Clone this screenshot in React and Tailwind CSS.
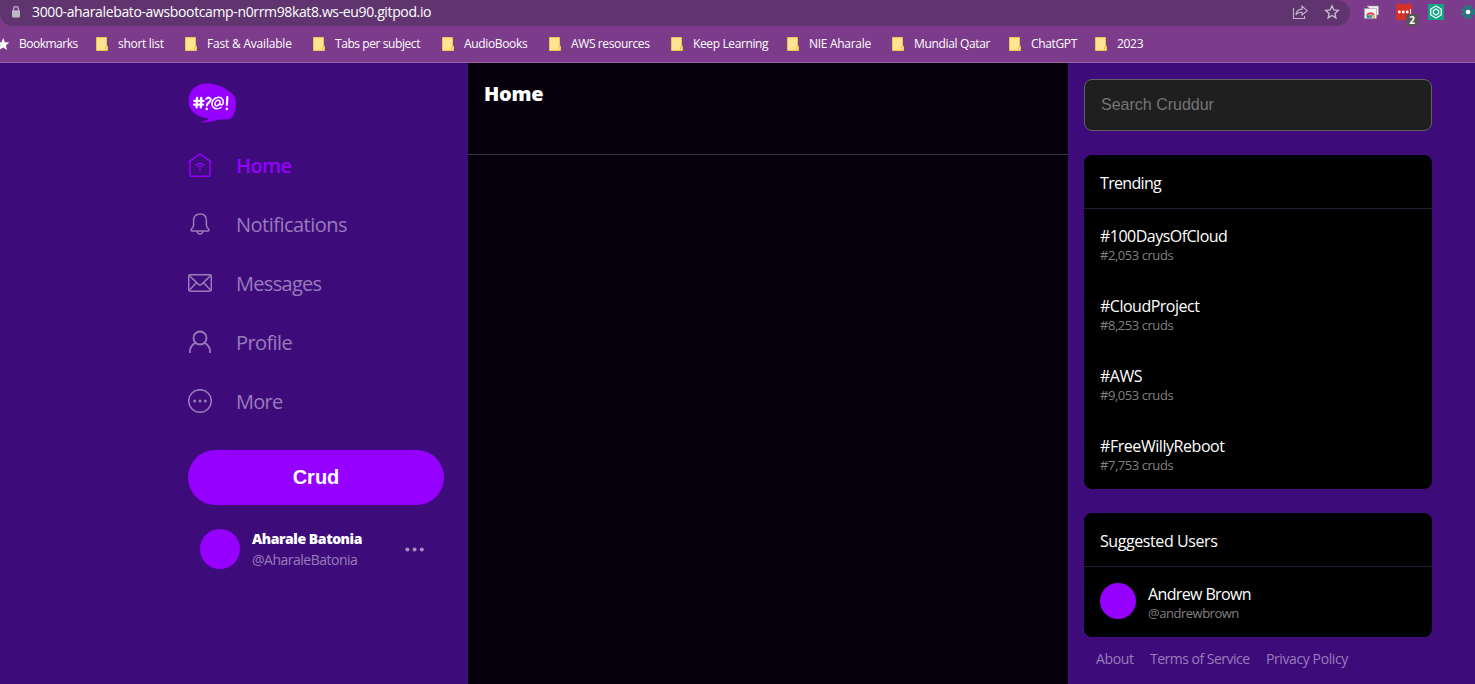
import React from "react";

const bookmarks = [
  { label: "short list", width: "w-[89px] tracking-[-0.3px]" },
  { label: "Fast & Available", width: "w-[128px] tracking-[-0.2px]" },
  { label: "Tabs per subject", width: "w-[129px] tracking-[-0.42px]" },
  { label: "AudioBooks", width: "w-[107px] tracking-[-0.35px]" },
  { label: "AWS resources", width: "w-[122px] tracking-[-0.38px]" },
  { label: "Keep Learning", width: "w-[116px] tracking-[-0.38px]" },
  { label: "NIE Aharale", width: "w-[105px] tracking-[-0.3px]" },
  { label: "Mundial Qatar", width: "w-[117px] tracking-[-0.35px]" },
  { label: "ChatGPT", width: "w-[86px] tracking-[-0.35px]" },
  { label: "2023", width: "w-[60px] tracking-[-0.3px]" },
];

const trends = [
  { tag: "#100DaysOfCloud", count: "#2,053 cruds", tracking: "tracking-[-0.52px]" },
  { tag: "#CloudProject", count: "#8,253 cruds", tracking: "tracking-[-0.5px]" },
  { tag: "#AWS", count: "#9,053 cruds", tracking: "tracking-[-0.5px]" },
  { tag: "#FreeWillyReboot", count: "#7,753 cruds", tracking: "tracking-[-0.44px]" },
];

function Icon({ children, className = "" }) {
  return (
    <svg
      width="24"
      height="24"
      viewBox="0 0 24 24"
      fill="none"
      stroke="currentColor"
      strokeWidth="1.5"
      className={`shrink-0 ${className}`}
    >
      {children}
    </svg>
  );
}

const HomeIcon = () => (
  <Icon>
    <path d="M0.5 9.2 L12 0.9 L23.5 9.2" />
    <path d="M1.9 8.4 V21.6 Q1.9 23.3 3.6 23.3 H20.4 Q22.1 23.3 22.1 21.6 V8.4" />
    <path d="M7.2 12.2 Q12 8.6 16.8 12.2" strokeWidth="1.2" />
    <path d="M9 14.2 Q12 12.1 15 14.2" strokeWidth="1.2" />
    <circle cx="12" cy="16.7" r="1.1" fill="currentColor" stroke="none" />
  </Icon>
);

const BellIcon = () => (
  <Icon>
    <path d="M12 1.9 C7.7 1.9 5.6 4.9 5.6 8.6 V13.2 Q5.6 14.3 4.6 15.6 L3.2 17.5 Q2.6 18.9 4 18.9 H20 Q21.4 18.9 20.8 17.5 L19.4 15.6 Q18.4 14.3 18.4 13.2 V8.6 C18.4 4.9 16.3 1.9 12 1.9 Z" />
    <path d="M9.2 19.2 C9.4 22.8 14.6 22.8 14.8 19.2" />
  </Icon>
);

const MailIcon = () => (
  <Icon>
    <rect x="0.7" y="3.7" width="22.6" height="16.6" rx="1.6" />
    <path d="M1.2 4.5 L10.2 13.1 Q12 14.7 13.8 13.1 L22.8 4.5" />
    <path d="M1.2 19.6 L8.4 11.6 M22.8 19.6 L15.6 11.6" />
  </Icon>
);

const ProfileIcon = () => (
  <Icon>
    <circle cx="12" cy="8" r="6.5" strokeWidth="1.8" />
    <path d="M1.8 23 C1.8 17.4 4.2 14.2 8 12.9 M16 12.9 C19.8 14.2 22.2 17.4 22.2 23" strokeWidth="1.8" />
  </Icon>
);

const MoreIcon = () => (
  <Icon>
    <circle cx="12" cy="12" r="11.3" />
    <g fill="currentColor" stroke="none">
      <circle cx="6.7" cy="12" r="1.5" />
      <circle cx="12" cy="12" r="1.5" />
      <circle cx="17.3" cy="12" r="1.5" />
    </g>
  </Icon>
);

const navItems = [
  { label: "Home", Glyph: HomeIcon, style: "font-semibold text-[#9500ff] tracking-[-0.6px]" },
  { label: "Notifications", Glyph: BellIcon, style: "font-[450] text-[#9a7bba] tracking-[-0.52px]" },
  { label: "Messages", Glyph: MailIcon, style: "font-[450] text-[#9a7bba] tracking-[-0.7px]" },
  { label: "Profile", Glyph: ProfileIcon, style: "font-[450] text-[#9a7bba] tracking-[-0.6px]" },
  { label: "More", Glyph: MoreIcon, style: "font-[450] text-[#9a7bba] tracking-[-0.7px]" },
];

function FolderIcon() {
  return (
    <svg width="12" height="14" viewBox="0 0 12 14" className="mr-[10px] shrink-0">
      <path d="M0.5 0.5 H10.5 V9 H11.5 V13.5 H0.5 Z" fill="#ffe591" stroke="#ecc54f" />
      <path d="M9.5 13 V10 H11" fill="none" stroke="#ecc54f" />
    </svg>
  );
}

function AddressBar() {
  return (
    <div className="flex h-[26px]">
      <div className="flex h-[26px] w-[1350px] shrink-0 items-center rounded-bl-[13px] rounded-r-[13px] bg-[#60356f]">
        <svg width="8" height="12" viewBox="0 0 8 12" className="mb-[2px] ml-[12px] shrink-0">
          <path d="M1.7 5 V2.9 A2.3 2.3 0 0 1 6.3 2.9 V5" fill="none" stroke="#bdb9c2" strokeWidth="1.2" />
          <rect x="0" y="4.2" width="8" height="7.2" rx="0.8" fill="#bdb9c2" />
        </svg>
        <span className="mb-[2px] ml-[12px] whitespace-nowrap text-[14px] leading-[20px] tracking-[-0.365px] text-white">
          3000-aharalebato-awsbootcamp-n0rrm98kat8.ws-eu90.gitpod.io
        </span>
        <svg width="16" height="16" viewBox="0 0 16 16" className="mb-[2px] ml-auto mr-[16px]" fill="none" stroke="#c3b3c9" strokeWidth="1.1">
          <path d="M1.5 4 V14.5 H12.5 V12" />
          <path d="M3.8 11 C4.4 6.8 6.6 5.3 10 5.1 V2.3 L15.2 6.7 L10 11 V8.2 C7.2 8.2 5.2 8.8 3.8 11 Z" />
        </svg>
        <svg width="16" height="16" viewBox="0 0 16 16" className="mb-[2px] mr-[10px]" fill="none" stroke="#cdbfd2" strokeWidth="1.3">
          <path d="M8 1.8 L9.8 6 L14.3 6.4 L10.9 9.4 L11.9 13.8 L8 11.5 L4.1 13.8 L5.1 9.4 L1.7 6.4 L6.2 6 Z" />
        </svg>
      </div>
      <svg width="15" height="14" viewBox="0 0 15 14" className="ml-[14px] mt-[5px] shrink-0">
        <path d="M3 1 H14.5 V10 H12" fill="#f2f0f3" stroke="#9b939f" strokeWidth="0.6" />
        <rect x="0.4" y="3.6" width="12" height="9.8" fill="#f5f5f5" stroke="#a49ba8" strokeWidth="0.6" />
        <path d="M2.3 10.6 A4.4 4.4 0 0 1 10.9 10.6 H8.4 A1.9 1.9 0 0 0 4.8 10.6 Z" fill="#dd4b3e" />
        <path d="M2.2 9.8 L5 11 V13 H2.8 Z" fill="#2ba24c" />
        <path d="M8 10.5 H11 V13 H8.8 Z" fill="#f9c631" />
        <circle cx="6.6" cy="11.5" r="1.7" fill="#4386f5" />
      </svg>
      <div className="relative ml-[17px] mt-[4px] h-4 w-4 shrink-0 rounded-[1px] bg-[#d3302b]">
        <svg width="16" height="16" viewBox="0 0 16 16" fill="white">
          <circle cx="3.4" cy="8" r="1.4" />
          <circle cx="7.3" cy="8" r="1.4" />
          <circle cx="11.2" cy="8" r="1.4" />
          <rect x="14" y="5" width="1" height="5" />
        </svg>
        <span className="absolute left-[10px] top-[10px] flex h-3 w-3 items-center justify-center rounded-[2px] bg-[#565656] text-[10px] font-bold leading-none text-white">
          2
        </span>
      </div>
      <svg width="16" height="16" viewBox="0 0 16 16" className="ml-[16px] mt-[4px] shrink-0" fill="none" stroke="white">
        <rect width="16" height="16" rx="1" fill="#10a37f" stroke="none" />
        <path d="M8 2 L13.2 5 V11 L8 14 L2.8 11 V5 Z" strokeWidth="1.2" />
        <path d="M8 5 L10.6 6.5 V9.5 L8 11 L5.4 9.5 V6.5 Z" strokeWidth="1.2" />
      </svg>
      <svg width="15" height="16" viewBox="0 0 15 16" className="ml-[16px] mt-[4px] shrink-0">
        <g fill="none" stroke="#10887c">
          <circle cx="8" cy="8" r="5.6" strokeWidth="2.6" strokeDasharray="3 1.4" />
          <circle cx="8" cy="8" r="3.4" strokeWidth="1.5" />
        </g>
        <circle cx="8" cy="8" r="2.3" fill="white" />
      </svg>
    </div>
  );
}

function BookmarkBar() {
  return (
    <div className="flex h-9 items-center text-[12px] font-[450] leading-4 text-white">
      <div className="flex w-[96px] shrink-0 items-center tracking-[-0.5px]">
        <svg width="10" height="13" viewBox="0 0 10 13" className="mr-[9px]">
          <path d="M3.2 0 L4.9 4.2 L9.3 4.6 L5.9 7.5 L7 12 L3.2 9.5 L-0.6 12 L0.4 7.5 L-3 4.6 L1.5 4.2 Z" fill="white" />
        </svg>
        Bookmarks
      </div>
      {bookmarks.map(({ label, width }) => (
        <div key={label} className={`flex shrink-0 items-center whitespace-nowrap ${width}`}>
          <FolderIcon />
          {label}
        </div>
      ))}
    </div>
  );
}

function Logo() {
  return (
    <svg width="48" height="40" viewBox="0 0 48 40" className="block">
      <path
        d="M18 0.2 C29 0 43 7 46.8 14 C49.5 20 47 30 44.5 34 C42 37 37 36.5 33 36.5 C27 36.5 22 40.5 11.5 39 C16 38.5 19 37.8 20.5 35.5 C8 34.5 0.5 27 0.5 18 C0.5 8 8 0.5 18 0.2 Z"
        fill="#9500ff"
      />
      <g fill="none" stroke="white" strokeWidth="2" strokeLinecap="round">
        <path d="M9 15 L8.6 24.4 M13.2 15 L12.8 24.4 M6.3 17.8 H15.5 M6 21.6 H15" strokeWidth="2.3" />
        <path d="M18.2 15.8 C20.2 13.6 23.3 14.8 22.5 17.6 C22 19.4 19 19.8 18.9 22.5" />
        <path d="M18.7 25.8 V26" strokeWidth="2.4" />
        <path d="M32 17.8 C29 16.2 26.6 18.8 27 21.2 C27.5 24 30.6 23 31.7 20.4 L32 17.8 C31.2 22.8 35 23 35.3 19.5 C35.5 15.8 32.7 14 29.6 14.4 C26 14.8 23.8 18 24 21.3 C24.3 25.5 29 27.2 33 24.5" strokeWidth="1.5" />
        <path d="M39.3 14.2 L38.9 21.8" strokeWidth="2.2" />
        <path d="M38.8 25.7 V26" strokeWidth="2.4" />
      </g>
    </svg>
  );
}

function Sidebar() {
  return (
    <aside className="w-[468px] shrink-0 pl-[188px] pr-6 pt-5">
      <Logo />
      <nav className="mt-3">
        {navItems.map(({ label, Glyph, style }) => (
          <a key={label} className={`flex h-[59px] items-center gap-6 text-[20px] leading-7 ${style}`}>
            <Glyph />
            <span className="pt-[2px]">{label}</span>
          </a>
        ))}
      </nav>
      <button className="mt-5 h-[55px] w-full rounded-full bg-[#9500ff] pb-[2px] font-['Liberation_Sans',sans-serif] text-[20px] font-bold text-white">
        Crud
      </button>
      <div className="mt-[23px] flex items-center pl-3 pr-5">
        <div className="h-10 w-10 shrink-0 rounded-full bg-[#9500ff]" />
        <div className="ml-3 whitespace-nowrap text-[14px] leading-[21px]">
          <div className="font-extrabold tracking-[-0.44px] text-white">Aharale Batonia</div>
          <div className="font-[450] tracking-[-0.5px] text-[#9a7bba]">@AharaleBatonia</div>
        </div>
        <svg width="19" height="5" viewBox="0 0 19 5" className="ml-auto shrink-0" fill="#a98bc5">
          <circle cx="2.4" cy="2.5" r="2" />
          <circle cx="9.6" cy="2.5" r="2" />
          <circle cx="16.8" cy="2.5" r="2" />
        </svg>
      </div>
    </aside>
  );
}

function Panel({ title, tracking, children }) {
  return (
    <section className="mt-6 overflow-hidden rounded-lg bg-black">
      <h2 className={`flex h-[54px] items-center border-b border-[#1f2030] px-4 pt-[2px] text-[16px] font-[450] text-white ${tracking}`}>
        {title}
      </h2>
      {children}
    </section>
  );
}

function RightColumn() {
  return (
    <aside className="w-[364px] shrink-0 pl-4 pt-4">
      <input
        placeholder="Search Cruddur"
        className="block h-[52px] w-full rounded-lg border border-[#606060] bg-[#1f1f1f] px-4 font-['Liberation_Sans',sans-serif] text-[16px] placeholder:text-[#757575]"
      />
      <Panel title="Trending" tracking="tracking-[-0.68px]">
        {trends.map(({ tag, count, tracking }) => (
          <div key={tag} className="h-[70px] px-4 pt-[17px] font-[450]">
            <div className={`text-[16px] leading-[21px] text-white ${tracking}`}>{tag}</div>
            <div className="text-[13px] leading-[17px] tracking-[-0.45px] text-[#808080]">{count}</div>
          </div>
        ))}
      </Panel>
      <Panel title="Suggested Users" tracking="tracking-[-0.42px]">
        <div className="flex h-[70px] items-start px-4 pt-4 font-[450]">
          <div className="h-9 w-9 shrink-0 rounded-full bg-[#9500ff]" />
          <div className="ml-3 pt-px">
            <div className="text-[16px] leading-[21px] tracking-[-0.63px] text-white">Andrew Brown</div>
            <div className="text-[13px] leading-[17px] tracking-[-0.48px] text-[#808080]">@andrewbrown</div>
          </div>
        </div>
      </Panel>
      <footer className="flex whitespace-nowrap pl-3 pt-3 text-[14px] font-[450] leading-5 text-[#9a7bba]">
        <a className="w-[54px] tracking-[-0.35px]">About</a>
        <a className="w-[116px] tracking-[-0.5px]">Terms of Service</a>
        <a className="tracking-[-0.4px]">Privacy Policy</a>
      </footer>
    </aside>
  );
}

export default function App() {
  return (
    <div className="flex h-[684px] w-[1475px] flex-col overflow-hidden bg-[#3d0c7a] font-['Open_Sans','Noto_Sans',sans-serif]">
      <header className="h-[63px] shrink-0 border-b border-[#9a65a8] bg-[#7c3b8b]">
        <AddressBar />
        <BookmarkBar />
      </header>
      <div className="flex min-h-0 flex-1">
        <Sidebar />
        <main className="w-[600px] shrink-0 bg-[#06000d]">
          <div className="h-[92px] border-b border-[#383442] px-4 pt-[17px]">
            <h1 className="text-[20px] font-extrabold leading-7 tracking-[-0.3px] text-white">Home</h1>
          </div>
        </main>
        <RightColumn />
      </div>
    </div>
  );
}
